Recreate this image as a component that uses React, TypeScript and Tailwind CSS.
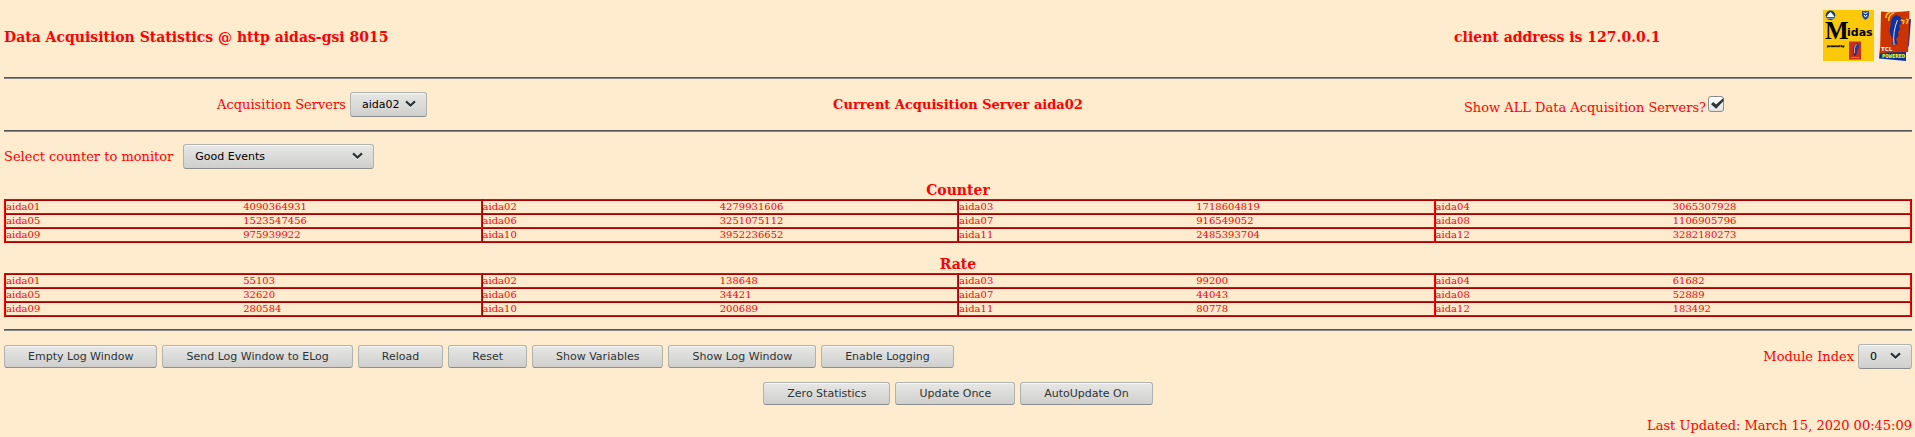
import { useState, type ReactNode, type SelectHTMLAttributes } from "react";

type Reading = [string, string];

const counters: Reading[][] = [
  [["aida01", "4090364931"], ["aida02", "4279931606"], ["aida03", "1718604819"], ["aida04", "3065307928"]],
  [["aida05", "1523547456"], ["aida06", "3251075112"], ["aida07", "916549052"], ["aida08", "1106905796"]],
  [["aida09", "975939922"], ["aida10", "3952236652"], ["aida11", "2485393704"], ["aida12", "3282180273"]],
];

const rates: Reading[][] = [
  [["aida01", "55103"], ["aida02", "138648"], ["aida03", "99200"], ["aida04", "61682"]],
  [["aida05", "32620"], ["aida06", "34421"], ["aida07", "44043"], ["aida08", "52889"]],
  [["aida09", "280584"], ["aida10", "200689"], ["aida11", "80778"], ["aida12", "183492"]],
];

const servers = [
  "aida01", "aida02", "aida03", "aida04", "aida05", "aida06",
  "aida07", "aida08", "aida09", "aida10", "aida11", "aida12",
];

const controlFace =
  "rounded-[3px] border border-[#b0b2b0] border-b-[#8c8e8b] bg-linear-to-b from-[#e7e7e5] to-[#cfcfcd] font-['DejaVu_Sans',sans-serif] text-[11px] leading-[15px] shadow-[inset_0_1px_0_#f6f6f5]";

function Button({ children }: { children: ReactNode }) {
  return (
    <button type="button" className={`${controlFace} h-[23px] px-[23px] text-[#2e3436]`}>
      {children}
    </button>
  );
}

function Select({ className = "", children, ...rest }: SelectHTMLAttributes<HTMLSelectElement>) {
  return (
    <span className="relative inline-flex">
      <select {...rest} className={`${controlFace} h-[25px] appearance-none pl-[11px] text-black ${className}`}>
        {children}
      </select>
      <svg className="pointer-events-none absolute top-[8px] right-[11px]" width="11" height="8" viewBox="0 0 11 8" fill="none">
        <path d="M1 2.2 5.5 6.4 10 2.2" stroke="#f4f4f3" strokeWidth="2.2" />
        <path d="M1 1.4 5.5 5.6 10 1.4" stroke="#2e3436" strokeWidth="2.2" />
      </svg>
    </span>
  );
}

function Rule() {
  return <hr className="h-[2px] border-0 border-t border-[#55555a] bg-[#88878a]" />;
}

function ReadingTable({ title, rows }: { title: string; rows: Reading[][] }) {
  return (
    <table className="w-full table-fixed border-collapse text-[10px] leading-[12px]">
      <caption className="pt-px text-[14px] leading-[17px] font-bold">{title}</caption>
      <tbody>
        {rows.map((row) => (
          <tr key={row[0][0]} className="border-2 border-[#f00] [border-style:ridge]">
            {row.map(([name, value]) => [
              <td key={name} className="h-[14px] border-l-2 border-[#f00] p-0 [border-left-style:ridge]">
                {name}
              </td>,
              <td key={`${name}-value`} className="h-[14px] p-0">
                {value}
              </td>,
            ])}
          </tr>
        ))}
      </tbody>
    </table>
  );
}

function MidasLogo() {
  return (
    <svg width="51" height="51" viewBox="0 0 51 51" role="img" aria-label="Midas">
      <rect width="51" height="51" fill="#fbc907" />
      <circle cx="7.5" cy="5.3" r="4.8" fill="#123a75" />
      <path d="M3.5 7 5 4.5 7.5 2 10 4.5 11.5 7z" fill="#fff" />
      <path d="M4 8.3h7" stroke="#9fb4d0" />
      <path d="M39 1h7v4.5q-.5 3-3.5 4.5-3-1.5-3.5-4.5z" fill="#234a96" />
      <path d="m40.5 2.5 2 1 2-1M41 5l1.5 2L44 5" stroke="#fff" fill="none" />
      <text x="2" y="28.5" fontFamily="Liberation Serif, serif" fontSize="25" fontWeight="bold" fill="#000">M</text>
      <text x="24" y="26" fontFamily="DejaVu Sans, sans-serif" fontSize="11" fontWeight="bold" fill="#000">idas</text>
      <text x="4" y="36.5" fontFamily="DejaVu Sans, sans-serif" fontSize="2.6" fontWeight="bold" fill="#000" stroke="#000" strokeWidth=".3">powered by</text>
      <rect x="26" y="31.5" width="12" height="18" fill="#cc2f10" />
      <path d="M31 46q-2-5 0-9t3-4q3 1 1.500 5t-2.500 8z" fill="#233a8c" />
      <path d="M31.5 43q-1-5 2-9" stroke="#e9c4a8" fill="none" strokeWidth=".8" />
      <path d="M28 47.5h8" stroke="#e88a60" strokeDasharray="1.5 .6" />
    </svg>
  );
}

function TclLogo() {
  return (
    <svg width="33" height="51" viewBox="0 0 33 51" role="img" aria-label="Tcl Powered">
      <path d="M28 10 33 9 31 35 28 43V51L1 48.5 2 38z" fill="#0a32a0" />
      <path d="M3 1.5 14 2.5 31.5 1 30 42 10 42.5 2 43.500z" fill="#cc3300" />
      <path d="M13 26 11.5 21 13 13 12 12 15 7 18 5 21 6 24 9 22 10 23.500 13 21 16 22 19 20 22 20.500 26 18 29 20 35 17 33 16 36 14 34 15 29z" fill="#0a32a0" />
      <path d="M16 35Q14.5 22 19.5 10" stroke="#f6d8c8" fill="none" />
      <path d="M8 8Q8 3 12 2.5M11 11Q10 5 16 3M23 10l3 1-1 3M28 9l2 1-1.500 4" stroke="#fbc012" fill="none" strokeWidth="1.6" />
      <text x="3" y="41" fontFamily="DejaVu Sans, sans-serif" fontSize="5.5" fontWeight="bold" fill="#fff">TCL</text>
      <text x="4" y="48.3" fontFamily="DejaVu Sans Mono, monospace" fontSize="5.5" fontWeight="bold" fill="#ff0">POWERED</text>
    </svg>
  );
}

export default function App() {
  const [showAll, setShowAll] = useState(true);

  return (
    <main className="min-h-screen bg-[#ffebcd] pt-[10px] pr-[3px] pl-1 font-['DejaVu_Serif',serif] text-[13px] leading-[15px] text-[#f00]">
      <header className="flex h-[67px] items-start">
        <h1 className="w-[76%] pt-[19px] text-[14px] leading-[17px] font-bold">
          Data Acquisition Statistics @ http aidas-gsi 8015
        </h1>
        <p className="flex-1 pt-[19px] text-[14px] leading-[17px] font-bold">client address is 127.0.0.1</p>
        <div className="flex gap-1 pr-px">
          <MidasLogo />
          <TclLogo />
        </div>
      </header>
      <Rule />

      <section className="grid h-[51px] grid-cols-3 items-center justify-items-center">
        <div className="flex items-center gap-1">
          <label htmlFor="server">Acquisition Servers</label>
          <Select id="server" className="w-[77px]" defaultValue="aida02">
            {servers.map((name) => (
              <option key={name}>{name}</option>
            ))}
          </Select>
        </div>
        <h2 className="font-bold">Current Acquisition Server aida02</h2>
        <label className="flex items-start gap-[2px] pt-[2px]">
          <span className="pt-1">Show ALL Data Acquisition Servers?</span>
          <span className="relative inline-flex">
            <input
              type="checkbox"
              checked={showAll}
              onChange={(event) => setShowAll(event.target.checked)}
              className="size-[16px] appearance-none rounded-[3px] border border-[#8c8e8b] bg-linear-to-b from-white to-[#e4e4e2]"
            />
            {showAll && (
              <svg className="pointer-events-none absolute top-[2px] left-[3px]" width="13" height="11" viewBox="0 0 13 11">
                <path d="M0 6.200 2.200 4 5 6.600 12.500 0v3L5.200 10.800z" fill="#2e3436" />
              </svg>
            )}
          </span>
        </label>
      </section>
      <Rule />

      <section className="flex items-center gap-[10px] pt-3">
        <label htmlFor="counter">Select counter to monitor</label>
        <Select id="counter" className="w-[191px]" defaultValue="Good Events">
          <option>Good Events</option>
        </Select>
      </section>

      <section className="flex flex-col gap-3 pt-3 pb-3">
        <ReadingTable title="Counter" rows={counters} />
        <ReadingTable title="Rate" rows={rates} />
      </section>
      <Rule />

      <section className="flex items-center justify-between pt-[13px]">
        <div className="flex gap-[5px]">
          <Button>Empty Log Window</Button>
          <Button>Send Log Window to ELog</Button>
          <Button>Reload</Button>
          <Button>Reset</Button>
          <Button>Show Variables</Button>
          <Button>Show Log Window</Button>
          <Button>Enable Logging</Button>
        </div>
        <div className="flex items-center gap-1">
          <label htmlFor="module">Module Index</label>
          <Select id="module" className="w-[54px]" defaultValue="0">
            <option>0</option>
            <option>1</option>
            <option>2</option>
            <option>3</option>
          </Select>
        </div>
      </section>

      <section className="flex justify-center gap-[5px] pt-[13px]">
        <Button>Zero Statistics</Button>
        <Button>Update Once</Button>
        <Button>AutoUpdate On</Button>
      </section>

      <footer className="pt-[13px] text-right">Last Updated: March 15, 2020 00:45:09</footer>
    </main>
  );
}
